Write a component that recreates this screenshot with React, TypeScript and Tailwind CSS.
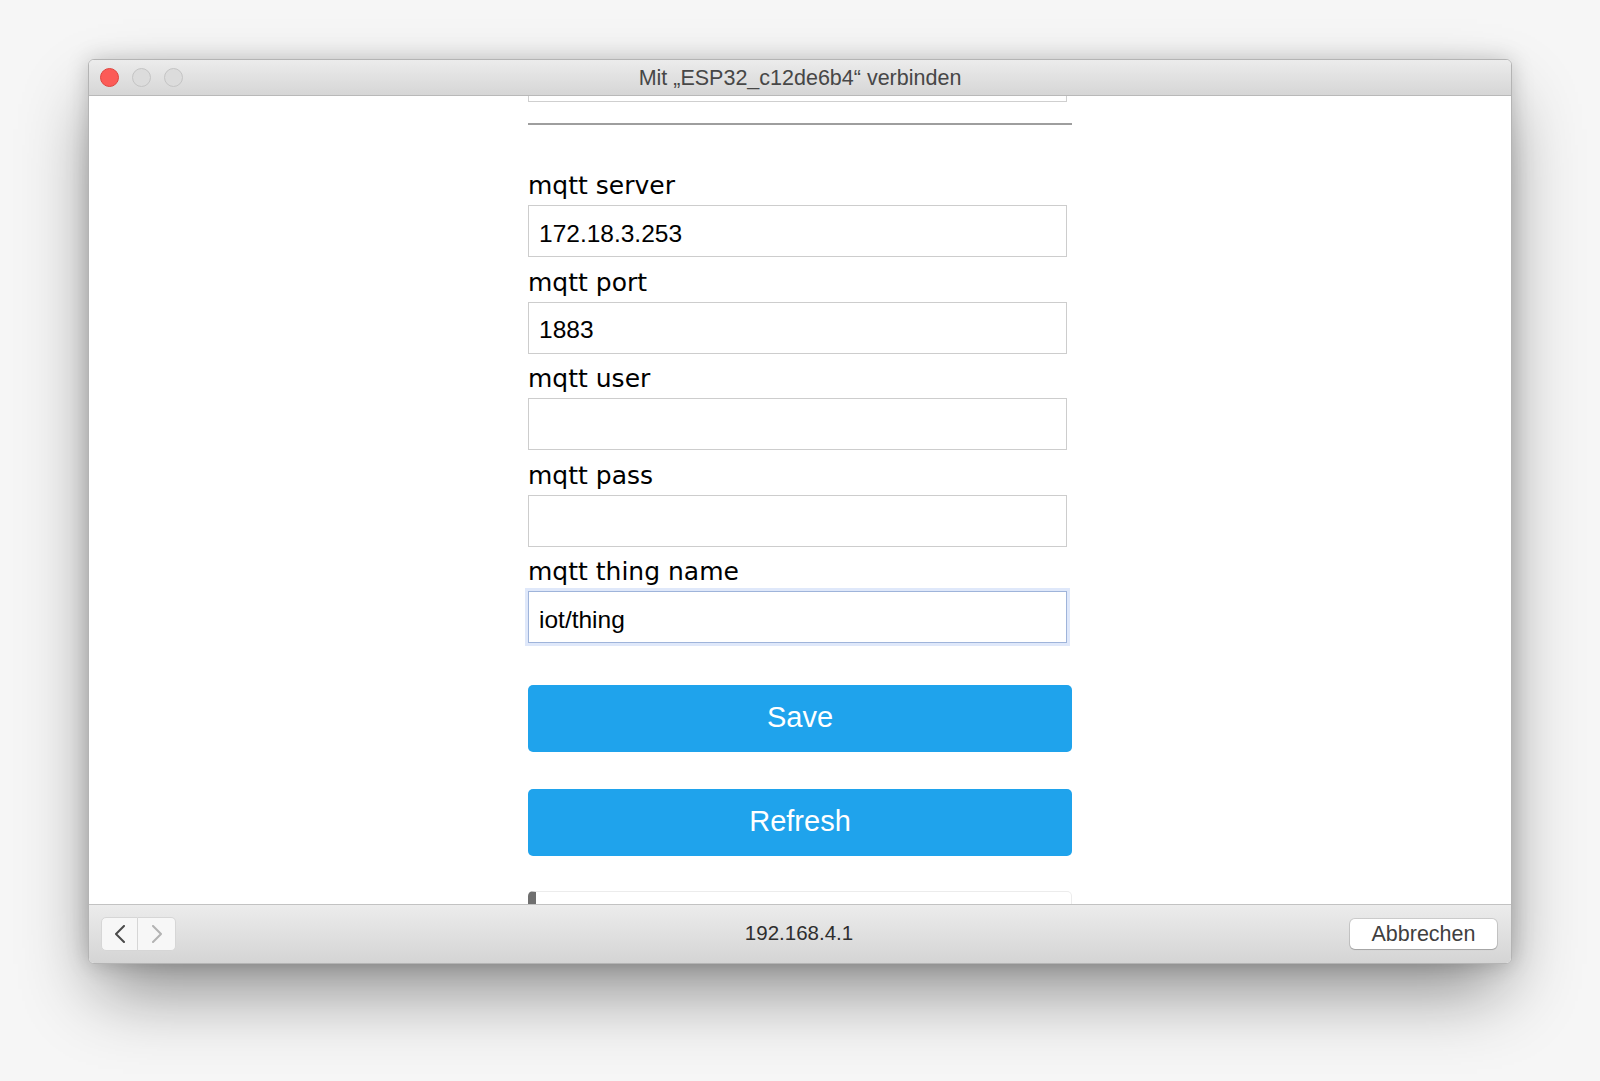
const fields = [
  { label: "mqtt server", value: "172.18.3.253" },
  { label: "mqtt port", value: "1883" },
  { label: "mqtt user", value: "" },
  { label: "mqtt pass", value: "" },
  { label: "mqtt thing name", value: "iot/thing", focused: true },
];

function TrafficLights() {
  return (
    <div className="flex items-center gap-[13px]">
      <span className="h-[19px] w-[19px] rounded-full bg-[#fc5b57] border border-[#e0443e]" />
      <span className="h-[19px] w-[19px] rounded-full bg-[#dcdcdc] border border-[#c4c4c4]" />
      <span className="h-[19px] w-[19px] rounded-full bg-[#dcdcdc] border border-[#c4c4c4]" />
    </div>
  );
}

function Chevron({ dir, color }: { dir: "left" | "right"; color: string }) {
  return (
    <svg width="14" height="18" viewBox="0 0 14 18" fill="none">
      <path
        d={dir === "left" ? "M11 1 L3 9 L11 17" : "M3 1 L11 9 L3 17"}
        stroke={color}
        strokeWidth="2"
        strokeLinecap="round"
        strokeLinejoin="round"
      />
    </svg>
  );
}

export default function App() {
  return (
    <div className="w-[1600px] h-[1081px] bg-[#f6f6f6] pt-[59px] pl-[88px] overflow-hidden">
      <div className="w-[1424px] h-[905px] rounded-[6px] bg-white flex flex-col overflow-hidden border border-[#b4b4b4] shadow-[0_35px_70px_-10px_rgba(0,0,0,0.45),0_0_22px_rgba(0,0,0,0.18)]">
        {/* title bar */}
        <div className="h-[36px] shrink-0 flex items-center px-[11px] bg-gradient-to-b from-[#ececec] to-[#d6d6d6] border-b border-[#b9b9b9] relative">
          <TrafficLights />
          <div className="absolute inset-0 pt-[2px] flex items-center justify-center text-[21.5px] text-[#474747] font-['Liberation_Sans',Arial,sans-serif]">
            Mit „ESP32_c12de6b4“ verbinden
          </div>
        </div>

        {/* page content */}
        <div className="h-[808px] shrink-0 overflow-hidden">
          <div className="w-[544px] ml-[439px] font-['DejaVu_Sans',Verdana,sans-serif] text-black">
            <div className="-mt-[46px] h-[52px] w-[539px] border border-[#cfcfcf]" />
            <div className="mt-[21px] h-[2px] bg-[#9e9e9e]" />

            <div className="mt-[42px]">
              {fields.map((f) => (
                <div key={f.label} className="mb-[6.5px]">
                  <div className="text-[25px] leading-[38px]">{f.label}</div>
                  <input
                    readOnly
                    value={f.value}
                    className={
                      "block w-[539px] h-[52px] pt-[5px] pb-0 pl-[10px] text-[24.5px] text-black outline-none font-['Liberation_Sans',Arial,sans-serif] " +
                      (f.focused
                        ? "border border-[#9fb4da] shadow-[0_0_0_3px_#dfe8fa]"
                        : "border border-[#cdcdcd]")
                    }
                  />
                </div>
              ))}
            </div>

            <button className="mt-[35px] w-full h-[67px] rounded-[5px] bg-[#1fa3ec] text-white text-[29px] font-['Liberation_Sans',Arial,sans-serif]">
              Save
            </button>
            <button className="mt-[37px] w-full h-[67px] rounded-[5px] bg-[#1fa3ec] text-white text-[29px] font-['Liberation_Sans',Arial,sans-serif]">
              Refresh
            </button>

            <div className="mt-[35px] h-[60px] rounded-[5px] border border-[#ececec] border-l-[8px] border-l-[#6f6f6f]" />
          </div>
        </div>

        {/* bottom bar */}
        <div className="h-[60px] shrink-0 grid grid-cols-[1fr_auto_1fr] items-center pl-[12px] pr-[14px] pb-[2px] bg-gradient-to-b from-[#ececec] to-[#d4d4d4] border-t border-[#c2c2c2] font-['Liberation_Sans',Arial,sans-serif]">
          <div className="flex">
            <button className="w-[37px] h-[34px] flex items-center justify-center rounded-l-[5px] bg-[#f7f7f7] border border-[#d6d6d6]">
              <Chevron dir="left" color="#4a4a4a" />
            </button>
            <button className="w-[38px] h-[34px] flex items-center justify-center rounded-r-[5px] bg-[#f7f7f7] border border-l-0 border-[#d6d6d6]">
              <Chevron dir="right" color="#b3b3b3" />
            </button>
          </div>
          <div className="text-[20.5px] text-[#2e2e2e]">192.168.4.1</div>
          <div className="flex justify-end">
            <button className="w-[147px] h-[30px] leading-[28px] rounded-[5px] bg-white text-[21.5px] text-[#3f3f3f] shadow-[0_0_0_1px_rgba(0,0,0,0.12),0_1px_1px_rgba(0,0,0,0.15)]">
              Abbrechen
            </button>
          </div>
        </div>
      </div>
    </div>
  );
}
